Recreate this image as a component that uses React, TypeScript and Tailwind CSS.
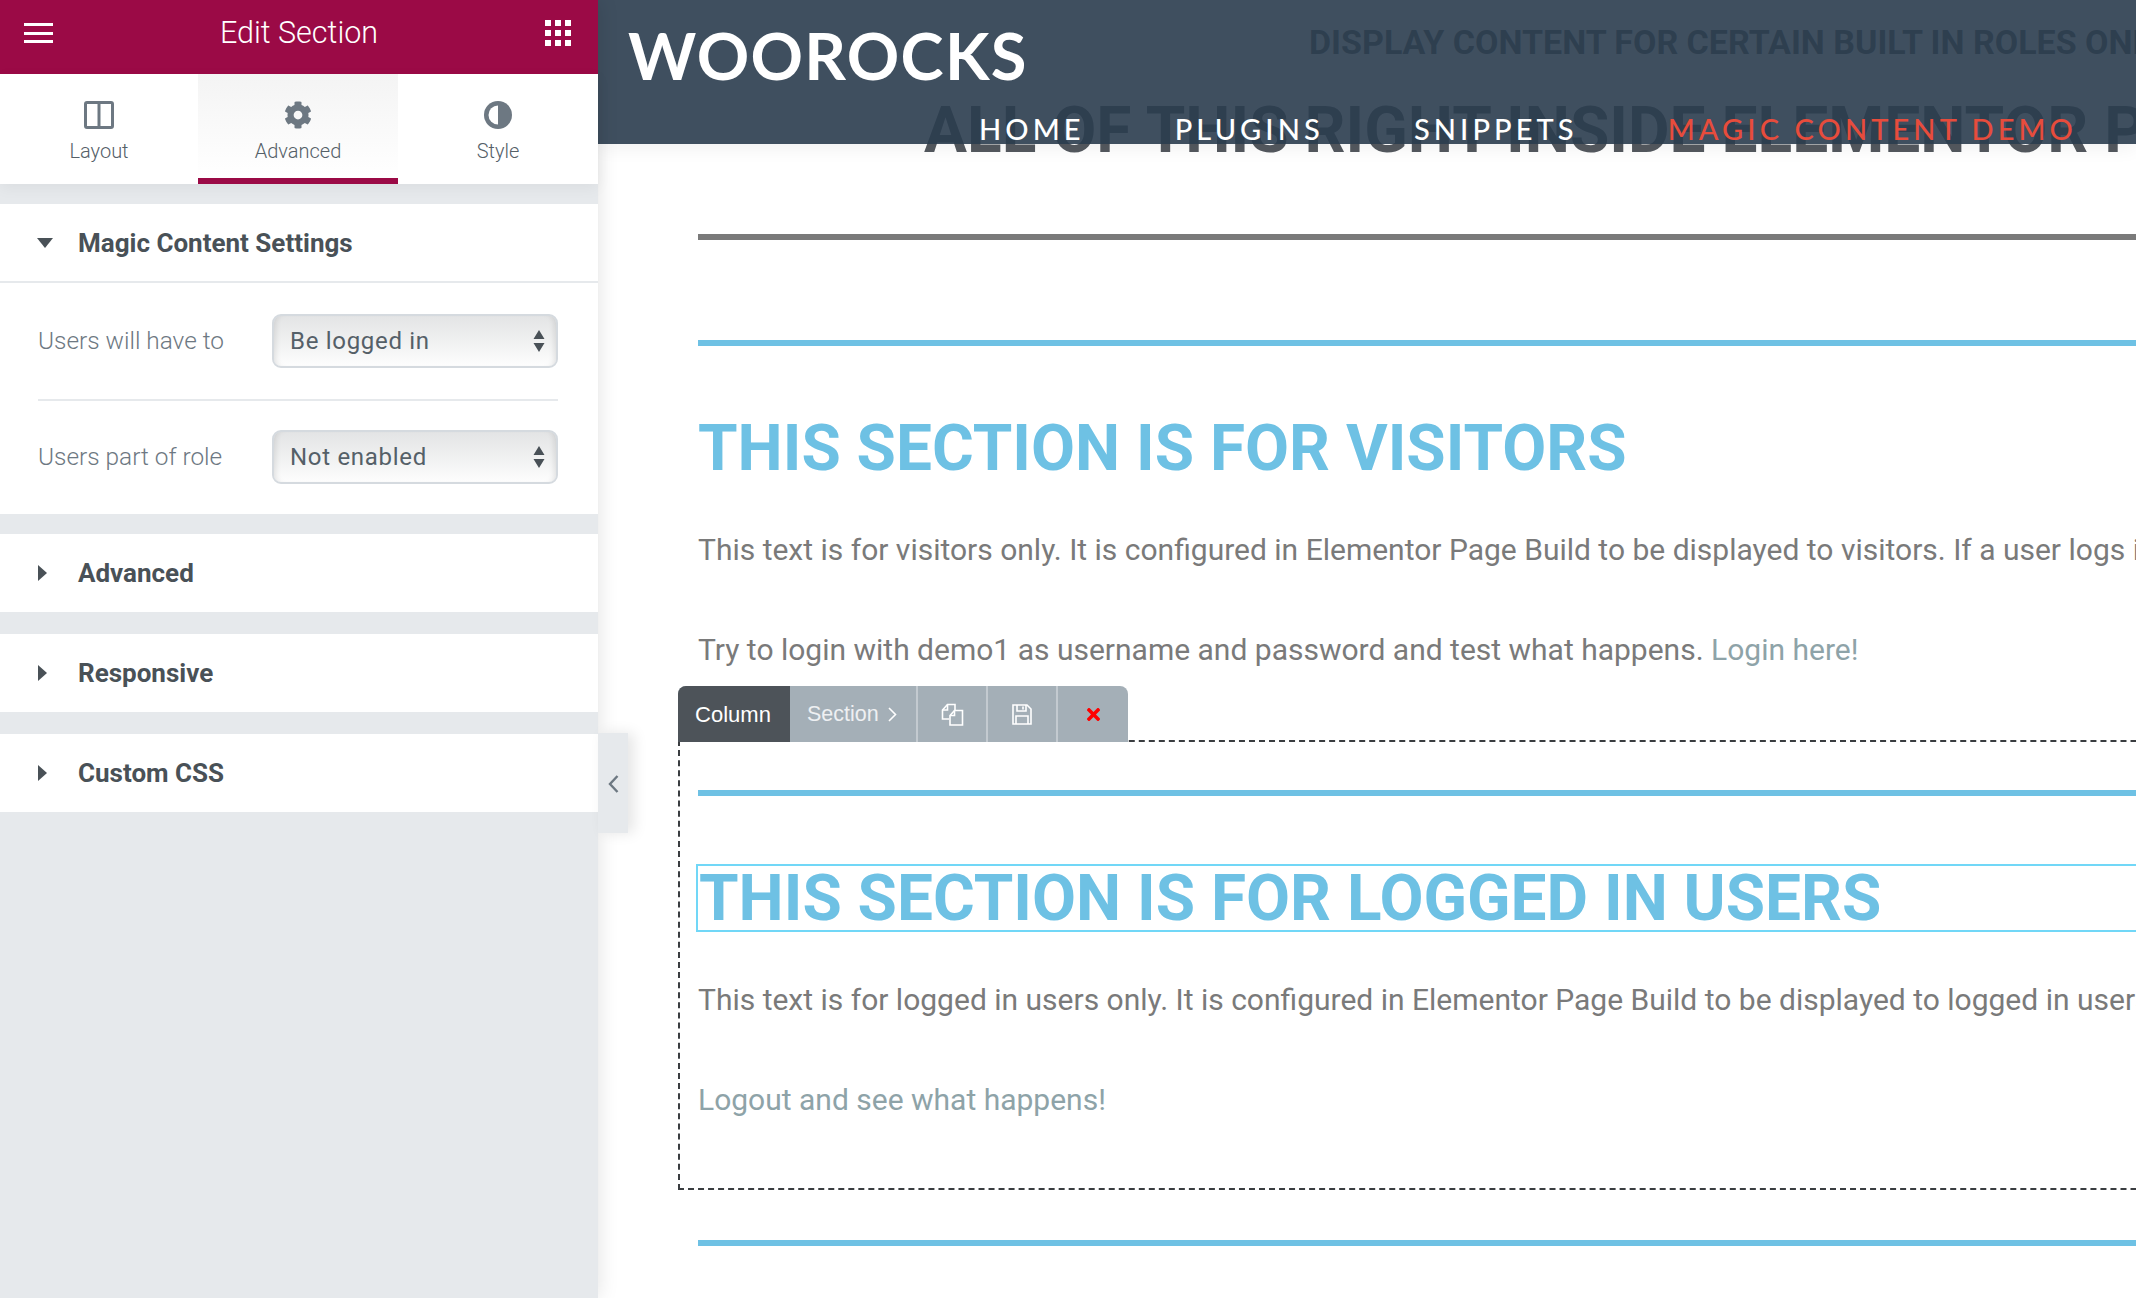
import React from "react";
import { FaCog, FaTimes } from "react-icons/fa";

const tabs = [
  { label: "Layout", icon: "layout" },
  { label: "Advanced", icon: "gear", active: true },
  { label: "Style", icon: "contrast" },
];

const TabIcon: React.FC<{ name: string }> = ({ name }) => {
  if (name === "gear") return <FaCog className="w-[28px] h-[28px] text-[#6d7882]" />;
  if (name === "layout")
    return (
      <svg width="30" height="28" viewBox="0 0 30 28" fill="none" stroke="#6d7882" strokeWidth="3">
        <rect x="1.5" y="1.5" width="27" height="25" rx="1.5" />
        <path d="M15 1.5v25" />
      </svg>
    );
  return (
    <svg width="28" height="28" viewBox="0 0 28 28">
      <circle cx="14" cy="14" r="14" fill="#6d7882" />
      <path d="M14 4.5a9.5 9.5 0 0 0 0 19z" fill="#fff" />
    </svg>
  );
};

const SelectField: React.FC<{ label: string; value: string }> = ({ label, value }) => (
  <div className="flex items-center justify-between">
    <span className="text-[24.4px] font-light text-[#6d7882]">{label}</span>
    <div className="w-[286px] h-[54px] rounded-[9px] border-2 border-[#d5dadf] bg-gradient-to-b from-[#e3e4e5] to-[#fdfdfd] shadow-[inset_6px_0_6px_-5px_rgba(0,0,0,0.12),inset_-6px_0_6px_-5px_rgba(0,0,0,0.12)] flex items-center justify-between pl-[16px] pr-[11px]">
      <span className="text-[24px] tracking-[0.7px] text-[#556068]">{value}</span>
      <svg width="12" height="22" viewBox="0 0 12 22" fill="#495157">
        <path d="M6 0l5.5 9H.5zM6 22L.5 13h11z" />
      </svg>
    </div>
  </div>
);

const CollapsedSection: React.FC<{ title: string; className: string }> = ({ title, className }) => (
  <div className={`h-[78px] bg-white flex items-center pl-[38px] ${className}`}>
    <svg width="9" height="16" viewBox="0 0 9 16" fill="#495157" className="mr-[31px]">
      <path d="M0 0l9 8-9 8z" />
    </svg>
    <span className="text-[26px] font-bold text-[#495157]">{title}</span>
  </div>
);

const Sidebar = () => (
  <aside className="relative z-20 w-[598px] shrink-0 h-full bg-[#e6e9ec] shadow-[0_0_20px_rgba(0,0,0,0.12)]">
    <header className="h-[74px] bg-[#9b0a46] flex items-center justify-between pl-[24px] pr-[27px] pb-[8px] text-white">
      <div className="w-[29px] flex flex-col gap-[5.5px]">
        <span className="h-[3px] bg-white" />
        <span className="h-[3px] bg-white" />
        <span className="h-[3px] bg-white" />
      </div>
      <span className="text-[30.5px] font-light">Edit Section</span>
      <div className="grid grid-cols-3 gap-[3.5px] w-[26px]">
        {Array.from({ length: 9 }).map((_, i) => (
          <span key={i} className="h-[6.5px] bg-white" />
        ))}
      </div>
    </header>

    <nav className="grid grid-cols-[198px_200px_200px] h-[110px] bg-white shadow-[0_4px_14px_rgba(0,0,0,0.05)] relative">
      {tabs.map((t) => (
        <div
          key={t.label}
          className={`flex flex-col items-center pt-[27px] ${
            t.active ? "bg-gradient-to-b from-[#f4f4f4] to-white border-b-[6px] border-[#9b0a46]" : ""
          }`}
        >
          <TabIcon name={t.icon} />
          <span className="mt-[7px] text-[20px] font-light text-[#556068]">{t.label}</span>
        </div>
      ))}
    </nav>

    <section className="mt-[20px] bg-white">
      <div className="h-[79px] flex items-center pl-[37px] pt-[1px] border-b-2 border-[#e6e9ec]">
        <svg width="16" height="10" viewBox="0 0 16 10" fill="#495157" className="mr-[25px]">
          <path d="M0 0h16L8 10z" />
        </svg>
        <span className="text-[26px] font-bold text-[#495157]">Magic Content Settings</span>
      </div>
      <div className="pl-[38px] pr-[40px] pt-[31px] pb-[30px]">
        <SelectField label="Users will have to" value="Be logged in" />
        <div className="h-[2px] bg-[#e6e9ec] mt-[31px] mb-[29px]" />
        <SelectField label="Users part of role" value="Not enabled" />
      </div>
    </section>

    <CollapsedSection title="Advanced" className="mt-[20px]" />
    <CollapsedSection title="Responsive" className="mt-[22px]" />
    <CollapsedSection title="Custom CSS" className="mt-[22px]" />

    <div className="absolute left-full top-[733px] w-[30px] h-[100px] pt-[2px] bg-[#e6e9ec] shadow-[6px_0_14px_rgba(0,0,0,0.1)] flex items-center justify-center">
      <svg width="11" height="18" viewBox="0 0 11 18" fill="none" stroke="#6d7882" strokeWidth="2.4">
        <path d="M9.5 1L2 9l7.5 8" />
      </svg>
    </div>
  </aside>
);

const Toolbar = () => (
  <div className="absolute -top-[56px] -left-[2px] h-[56px] w-[450px] flex rounded-t-[8px] overflow-hidden bg-[#a4afb7] text-white font-['Liberation_Sans',sans-serif]">
    <div className="w-[112px] pr-[2px] bg-[#4d5359] flex items-center justify-center text-[22px]">Column</div>
    <div className="w-[128px] flex items-center pl-[17px] border-r-2 border-[#c3cad0] text-[21.5px] text-[#eef0f2]">
      Section
      <svg width="9" height="15" viewBox="0 0 9 15" fill="none" stroke="#fff" strokeWidth="1.6" className="ml-[9px]">
        <path d="M1 1l6.5 6.5L1 14" />
      </svg>
    </div>
    <div className="w-[70px] flex items-center justify-center border-r-2 border-[#c3cad0]">
      <svg width="23" height="23" viewBox="0 0 23 23" fill="none" stroke="#fff" strokeWidth="1.6">
        <path d="M8 16H1.5V7l5-5.5H14v6" />
        <path d="M6.5 1.5V7h-5" />
        <path d="M9 22V12.5l4.5-5h8V22z" />
        <path d="M13.5 7.5v5H9" />
      </svg>
    </div>
    <div className="w-[70px] flex items-center justify-center border-r-2 border-[#c3cad0]">
      <svg width="20" height="21" viewBox="0 0 20 21" fill="none" stroke="#fff" strokeWidth="1.6">
        <path d="M1 1h14l4 4v15H1z" />
        <path d="M5 1v6h9V1M11 2.500v3" />
        <path d="M4 20v-8h12v8" />
      </svg>
    </div>
    <div className="flex-1 flex items-center justify-center">
      <FaTimes className="w-[19px] h-[19px] text-[#ff0000]" />
    </div>
  </div>
);

const SiteHeader = () => (
  <div className="absolute z-10 top-0 inset-x-0 h-[144px] bg-[rgba(42,60,78,0.9)] shadow-[0_4px_18px_rgba(0,0,0,0.06)] text-white font-['Lato',sans-serif]">
    <div className="pl-[30px] pt-[18px] text-[65px] leading-[74px] font-bold tracking-[1.3px]">WOOROCKS</div>
    <div className="absolute left-[381px] top-[112px] flex text-[29px] leading-[34px] font-medium tracking-[4.1px] gap-[90px]">
      <span>HOME</span>
      <span>PLUGINS</span>
      <span>SNIPPETS</span>
      <span className="text-[#e74c3c]">MAGIC CONTENT DEMO</span>
    </div>
  </div>
);

const Rule: React.FC<{ className: string }> = ({ className }) => <div className={`h-[6px] ${className}`} />;

const Main = () => (
  <main className="relative flex-1 h-full overflow-hidden bg-white font-['Roboto',sans-serif]">
    <SiteHeader />
    <div className="pl-[100px] pt-[22px] w-[2400px] whitespace-nowrap">
      <h3 className="ml-[611px] text-[34px] leading-[40px] font-bold text-[#54595f]">
        DISPLAY CONTENT FOR CERTAIN BUILT IN ROLES ONLY
      </h3>
      <h2 className="ml-[226px] mt-[33px] text-[64px] leading-[72px] font-bold text-[#54595f]">
        ALL OF THIS RIGHT INSIDE ELEMENTOR PAGE BUILDER
      </h2>
      <Rule className="mt-[67px] bg-[#7a7a7a]" />
      <Rule className="mt-[100px] bg-[#6ec1e4]" />
      <h2 className="mt-[69px] text-[63.9px] leading-[68px] font-bold text-[#6ec1e4]">THIS SECTION IS FOR VISITORS</h2>
      <p className="mt-[47px] text-[30px] leading-[40px] text-[#7a7a7a]">
        This text is for visitors only. It is configured in Elementor Page Build to be displayed to visitors. If a user logs in
      </p>
      <p className="mt-[60px] text-[30px] leading-[40px] text-[#7a7a7a]">
        Try to login with demo1 as username and password and test what happens.{" "}
        <span className="text-[#8ea3a8]">Login here!</span>
      </p>

      <div className="relative mt-[70px] -ml-[20px] pl-[18px] pt-[48px] pb-[68px] border-2 border-dashed border-[#3a3d40]">
        <Toolbar />
        <Rule className="bg-[#6ec1e4]" />
        <h2 className="mt-[68px] -ml-[2px] pl-[1px] border-2 border-[#71d7f7] h-[68px] text-[63.9px] leading-[66px] font-bold text-[#6ec1e4]">
          THIS SECTION IS FOR LOGGED IN USERS
        </h2>
        <p className="mt-[48px] text-[30px] leading-[40px] text-[#7a7a7a]">
          This text is for logged in users only. It is configured in Elementor Page Build to be displayed to logged in users
        </p>
        <p className="mt-[60px] text-[30px] leading-[40px] text-[#8ea3a8]">Logout and see what happens!</p>
      </div>
      <Rule className="mt-[50px] bg-[#6ec1e4]" />
    </div>
  </main>
);

export default function App() {
  return (
    <div className="flex w-[2136px] h-[1298px] overflow-hidden bg-white font-['Roboto',sans-serif]">
      <Sidebar />
      <Main />
    </div>
  );
}
